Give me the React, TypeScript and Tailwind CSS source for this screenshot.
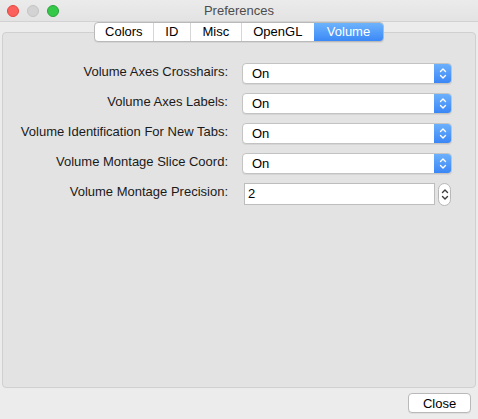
import React from 'react';

const tabs = ['Colors', 'ID', 'Misc', 'OpenGL', 'Volume'];

const comboRows = [
  'Volume Axes Crosshairs:',
  'Volume Axes Labels:',
  'Volume Identification For New Tabs:',
  'Volume Montage Slice Coord:',
];

function Chevrons({ color }: { color: string }) {
  return (
    <svg width="8" height="13" viewBox="0 0 8 13" fill="none" stroke={color} strokeWidth="1.4" strokeLinecap="round" strokeLinejoin="round">
      <path d="M1.5 4.5 L4 2 L6.5 4.5" />
      <path d="M1.5 8.5 L4 11 L6.5 8.5" />
    </svg>
  );
}

function Combo({ value }: { value: string }) {
  return (
    <div className="flex h-[21px] w-[210px] overflow-hidden rounded-[4px] border border-[#c3c3c3] bg-white shadow-[0_1px_0_rgba(0,0,0,0.06)]">
      <div className="flex flex-1 items-center pl-[9px] text-[13px] leading-none text-black">{value}</div>
      <div className="flex w-[17px] items-center justify-center bg-gradient-to-b from-[#6cb0fb] to-[#3a86f6]">
        <Chevrons color="#ffffff" />
      </div>
    </div>
  );
}

export default function App() {
  return (
    <div
      className="flex h-[419px] w-[478px] flex-col overflow-hidden bg-[#ececec] text-[#1a1a1a]"
      style={{ fontFamily: '"Liberation Sans", Arial, sans-serif' }}
    >
      {/* Title bar */}
      <div className="grid h-[22px] shrink-0 grid-cols-[1fr_auto_1fr] items-center border-b border-[#d2d2d2] bg-gradient-to-b from-[#ebebeb] to-[#e3e3e3]">
        <div className="flex items-center gap-[8px] pl-[7px]">
          <span className="h-[12px] w-[12px] rounded-full border border-[#e2463f] bg-[#fc605c]" />
          <span className="h-[12px] w-[12px] rounded-full border border-[#c4c4c4] bg-[#d3d3d3]" />
          <span className="h-[12px] w-[12px] rounded-full border border-[#2ba33b] bg-[#35c94a]" />
        </div>
        <div className="text-[13px] text-[#4d4d4d]">Preferences</div>
        <div />
      </div>

      {/* Tabs */}
      <div className="relative z-10 -mb-[10px] flex justify-center">
        <div className="flex h-[20px] overflow-hidden rounded-[4px] border border-[#b9b9b9] bg-white text-[13px] shadow-[0_1px_0_rgba(0,0,0,0.06)]">
          {tabs.map((t, i) => (
            <div
              key={t}
              className={
                t === 'Volume'
                  ? 'flex items-center bg-gradient-to-b from-[#6db3fb] to-[#3b88f7] px-[13px] text-white'
                  : i === 0
                    ? 'flex items-center px-[8px] text-black'
                    : 'flex items-center border-l border-[#d6d6d6] px-[8px] text-black'
              }
              style={t === 'Volume' ? undefined : { width: [58, 37, 51, 73][i] }}
            >
              <span className="w-full text-center">{t}</span>
            </div>
          ))}
        </div>
      </div>

      {/* Panel */}
      <div className="mx-[2px] flex h-[356px] shrink-0 flex-col gap-[9px] rounded-[4px] border border-[#d0d0d0] bg-[#e3e3e3] pt-[30px]">
        {comboRows.map((label) => (
          <div key={label} className="flex items-start gap-[14px]">
            <div className="w-[225px] pt-[1px] text-right text-[13px] leading-[16px]">{label}</div>
            <Combo value="On" />
          </div>
        ))}
        <div className="flex items-start gap-[14px]">
          <div className="w-[225px] pt-[1px] text-right text-[13px] leading-[16px]">Volume Montage Precision:</div>
          <div className="ml-[2px] flex items-start gap-[3px]">
            <div className="flex h-[22px] w-[191px] items-center border border-[#bdbdbd] bg-white pl-[3px] text-[13px] text-black">2</div>
            <div className="flex h-[23px] w-[13px] items-center justify-center rounded-full border border-[#b8b8b8] bg-white">
              <Chevrons color="#3c3c3c" />
            </div>
          </div>
        </div>
      </div>

      {/* Footer */}
      <div className="flex flex-1 items-start justify-end pr-[7px] pt-[5px]">
        <button className="h-[20px] w-[63px] rounded-[4px] border border-[#b9b9b9] bg-white text-[13px] leading-none text-black shadow-[0_1px_0_rgba(0,0,0,0.06)]">
          Close
        </button>
      </div>
    </div>
  );
}
